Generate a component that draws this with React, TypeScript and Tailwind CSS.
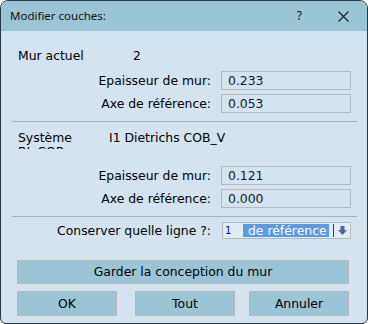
export default function App() {
  const field = (label: string, value: string, first = false) => (
    <div className={`flex h-[19px] items-center ${first ? '' : 'mt-[4px]'}`}>
      <div className="w-[200px] pr-[1px] text-right">{label}</div>
      <div className="ml-[9px] flex h-[19px] w-[130px] items-center border border-[#b5b8bb] pl-[6px] text-[#141a2a]">{value}</div>
    </div>
  );

  return (
    <div className="h-[324px] w-[368px] bg-white">
      <div className="flex h-full flex-col overflow-hidden rounded-t-[8px] rounded-b-[6px] border border-[#2a3949] bg-[#d3e3f0] font-['DejaVu_Sans',sans-serif] text-[12.4px] leading-[14px] text-black">
        {/* title bar */}
        <div className="flex h-[30px] shrink-0 items-center bg-[#9bc4d7] pl-[9px] font-['Noto_Sans',sans-serif] text-[11.5px] text-[#111]">
          <span>Modifier couches:</span>
          <span className="ml-auto mr-[36px] text-[12px]">?</span>
          <svg width="11" height="11" viewBox="0 0 11 11" className="mr-[18px]">
            <path d="M0.5 0.5 L10.5 10.5 M10.5 0.5 L0.5 10.5" stroke="#1a1a1a" strokeWidth="1.1" />
          </svg>
        </div>

        <div className="flex flex-1 flex-col pl-[11px] pr-[10px]">
          <div className="mt-[17px] flex h-[16px] items-center pl-[6px]">
            <span className="w-[115px]">Mur actuel</span>
            <span>2</span>
          </div>
          <div className="mt-[7px]">
            {field('Epaisseur de mur:', '0.233', true)}
            {field('Axe de référence:', '0.053')}
          </div>

          <div className="mt-[8px] h-px bg-[#a9b1b9]" />

          <div className="mt-[9px] flex pl-[6px]">
            <div className="h-[18px] w-[91px] overflow-hidden">
              Système
              <br />
              BL COB
            </div>
            <span>I1 Dietrichs COB_V</span>
          </div>
          <div className="mt-[17px]">
            {field('Epaisseur de mur:', '0.121', true)}
            {field('Axe de référence:', '0.000')}
          </div>

          <div className="mt-[8px] h-px bg-[#a9b1b9]" />

          <div className="mt-[5px] flex h-[17px] items-center">
            <div className="w-[200px] pr-[1px] text-right">Conserver quelle ligne ?:</div>
            <div className="ml-[10px] flex h-[17px] w-[129px] items-center border border-[#b5b8bb] bg-[#e4ecf3]">
              <span className="ml-[2px] w-[18px] text-[10px] text-[#0000ee]">1</span>
              <span className="flex h-[13px] w-[86px] items-center overflow-hidden whitespace-nowrap bg-[#5a9ae0] pl-[5px] text-white">de référence</span>
              <span className="ml-[4px] h-[13px] w-px bg-[#3a4450]" />
              <svg width="11" height="11" viewBox="0 0 11 11" className="ml-[3px]">
                <path d="M3.5 1 H7.5 V5 H10 L5.5 10 L1 5 H3.5 Z" fill="#4c6a94" />
              </svg>
            </div>
          </div>

          <button className="ml-[5px] mt-[21px] h-[24px] w-[332px] border border-[#b3b7ba] bg-[#9bc4d7]">
            Garder la conception du mur
          </button>
          <div className="ml-[5px] mt-[7px] flex h-[25px]">
            <button className="w-[100px] border border-[#b3b7ba] bg-[#9bc4d7]">OK</button>
            <button className="ml-[18px] w-[100px] border border-[#b3b7ba] bg-[#9bc4d7]">Tout</button>
            <button className="ml-[14px] w-[100px] border border-[#b3b7ba] bg-[#9bc4d7]">Annuler</button>
          </div>
        </div>
      </div>
    </div>
  );
}
